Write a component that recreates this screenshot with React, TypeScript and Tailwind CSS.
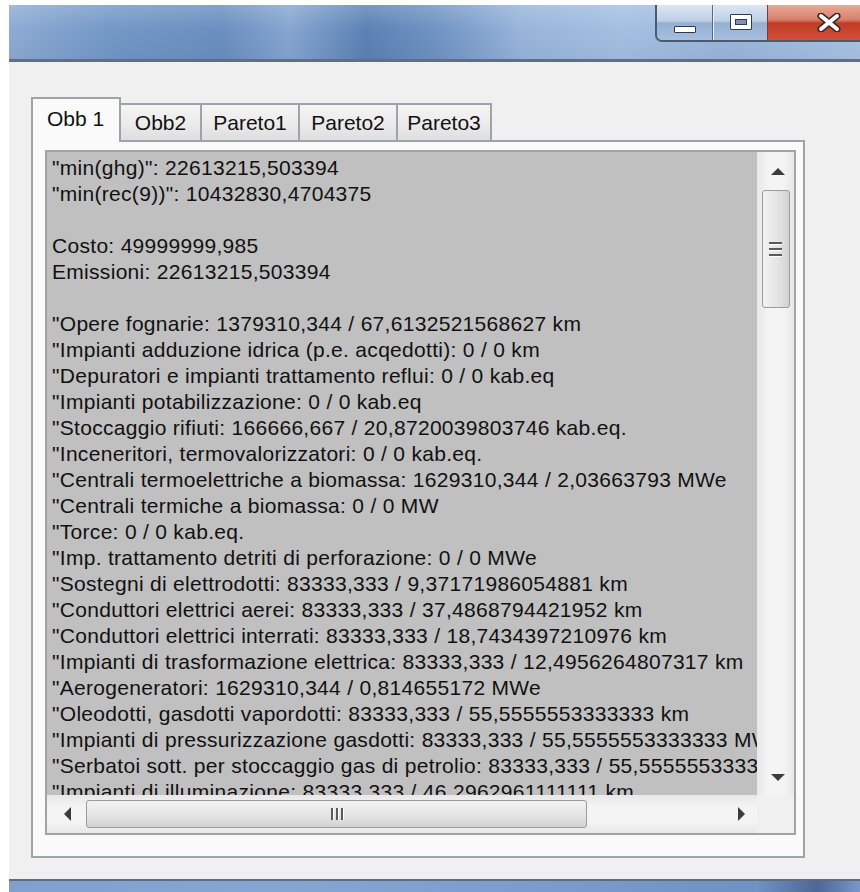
const lines: string[] = [
  '"min(ghg)": 22613215,503394',
  '"min(rec(9))": 10432830,4704375',
  '',
  'Costo: 49999999,985',
  'Emissioni: 22613215,503394',
  '',
  '"Opere fognarie: 1379310,344 / 67,6132521568627 km',
  '"Impianti adduzione idrica (p.e. acqedotti): 0 / 0 km',
  '"Depuratori e impianti trattamento reflui: 0 / 0 kab.eq',
  '"Impianti potabilizzazione: 0 / 0 kab.eq',
  '"Stoccaggio rifiuti: 166666,667 / 20,8720039803746 kab.eq.',
  '"Inceneritori, termovalorizzatori: 0 / 0 kab.eq.',
  '"Centrali termoelettriche a biomassa: 1629310,344 / 2,03663793 MWe',
  '"Centrali termiche a biomassa: 0 / 0 MW',
  '"Torce: 0 / 0 kab.eq.',
  '"Imp. trattamento detriti di perforazione: 0 / 0 MWe',
  '"Sostegni di elettrodotti: 83333,333 / 9,37171986054881 km',
  '"Conduttori elettrici aerei: 83333,333 / 37,4868794421952 km',
  '"Conduttori elettrici interrati: 83333,333 / 18,7434397210976 km',
  '"Impianti di trasformazione elettrica: 83333,333 / 12,4956264807317 km',
  '"Aerogeneratori: 1629310,344 / 0,814655172 MWe',
  '"Oleodotti, gasdotti vapordotti: 83333,333 / 55,5555553333333 km',
  '"Impianti di pressurizzazione gasdotti: 83333,333 / 55,5555553333333 MWe',
  '"Serbatoi sott. per stoccaggio gas di petrolio: 83333,333 / 55,5555553333333 km',
  '"Impianti di illuminazione: 83333,333 / 46,2962961111111 km',
];

const tabs = [
  { label: 'Obb2', w: 'w-[81px]' },
  { label: 'Pareto1', w: 'w-[98px]' },
  { label: 'Pareto2', w: 'w-[98px]' },
  { label: 'Pareto3', w: 'w-[94px]' },
];

function Arrow({ dir }: { dir: 'up' | 'down' | 'left' | 'right' }) {
  const pts = {
    up: '0,7 7,0 14,7',
    down: '0,0 14,0 7,7',
    left: '7,0 7,14 0,7',
    right: '0,0 0,14 7,7',
  }[dir];
  const vertical = dir === 'up' || dir === 'down';
  return (
    <svg width={vertical ? 14 : 7} height={vertical ? 7 : 14} viewBox={vertical ? '0 0 14 7' : '0 0 7 14'}>
      <polygon points={pts} fill="#3c3c3c" />
    </svg>
  );
}

function TitleBar() {
  return (
    <div className="relative flex h-[57px] justify-end border-b-[3px] border-[#5f6f86] bg-[linear-gradient(90deg,#8eabd3_0%,#7398c7_12%,#6a8fc0_25%,#86a6d0_33%,#5b82b5_42%,#6f93c3_50%,#97b4da_60%,#a3bfe1_72%,#9ab6db_85%,#a9c3e3_100%)]">
      <div className="absolute inset-0 bg-[linear-gradient(180deg,rgba(255,255,255,0.18)_0%,rgba(255,255,255,0)_45%,rgba(0,0,0,0.04)_100%)]" />
      <div className="relative flex h-[37px] overflow-hidden rounded-bl-[7px] border-b-2 border-l-2 border-[#4b5a70]">
        <div className="flex w-[56px] items-end justify-center border-r border-[#56677f] bg-[linear-gradient(180deg,#dce6f3_0%,#bfcfe5_45%,#95afd2_52%,#a7bfdf_100%)] pb-[7px]">
          <div className="h-[7px] w-[22px] rounded-[1px] border border-[#2f3a4a] bg-white" />
        </div>
        <div className="flex w-[54px] items-center justify-center border-l border-[#e6eef8] bg-[linear-gradient(180deg,#dce6f3_0%,#bfcfe5_45%,#95afd2_52%,#a7bfdf_100%)] pb-[2px]">
          <div className="flex h-[16px] w-[22px] items-center justify-center rounded-[1px] border border-[#2f3a4a] bg-white">
            <div className="h-[6px] w-[12px] border border-[#2f3a4a] bg-[#7d92b0]" />
          </div>
        </div>
        <div className="flex w-[93px] items-center justify-center border-l border-[#7a3b33] bg-[linear-gradient(180deg,#e9a898_0%,#d8806c_42%,#c33b24_52%,#d0503a_100%)] pl-[30px]">
          <svg width="24" height="19" viewBox="0 0 24 19">
            <path d="M4 3 L20 16 M20 3 L4 16" stroke="#3b2622" strokeWidth="7" strokeLinecap="round" />
            <path d="M4 3 L20 16 M20 3 L4 16" stroke="#ffffff" strokeWidth="4" strokeLinecap="round" />
          </svg>
        </div>
      </div>
    </div>
  );
}

function VScroll() {
  return (
    <div className="flex flex-col bg-[linear-gradient(90deg,#e8e8e8_0%,#f4f4f4_30%,#f4f4f4_70%,#e8e8e8_100%)]">
      <div className="flex h-[38px] items-center justify-center pl-[4px]">
        <Arrow dir="up" />
      </div>
      <div className="mx-auto flex h-[118px] w-[28px] flex-col items-center justify-center gap-[4px] rounded-[3px] border border-[#9b9b9b] bg-[linear-gradient(90deg,#f2f2f2_0%,#e6e6e6_50%,#d2d2d2_100%)]">
        <div className="h-[2px] w-[13px] bg-[#5a5a5a] shadow-[0_1px_0_#ffffff]" />
        <div className="h-[2px] w-[13px] bg-[#5a5a5a] shadow-[0_1px_0_#ffffff]" />
        <div className="h-[2px] w-[13px] bg-[#5a5a5a] shadow-[0_1px_0_#ffffff]" />
      </div>
      <div className="flex-1" />
      <div className="flex h-[36px] items-center justify-center pl-[4px]">
        <Arrow dir="down" />
      </div>
    </div>
  );
}

function HScroll() {
  return (
    <div className="flex items-center bg-[linear-gradient(180deg,#e8e8e8_0%,#f4f4f4_30%,#f4f4f4_70%,#e8e8e8_100%)]">
      <div className="flex w-[39px] justify-center pl-[2px]">
        <Arrow dir="left" />
      </div>
      <div className="flex h-[28px] w-[501px] items-center justify-center gap-[3px] rounded-[3px] border border-[#9b9b9b] bg-[linear-gradient(180deg,#f2f2f2_0%,#e6e6e6_50%,#d2d2d2_100%)]">
        <div className="h-[12px] w-[2px] bg-[#5a5a5a] shadow-[1px_0_0_#ffffff]" />
        <div className="h-[12px] w-[2px] bg-[#5a5a5a] shadow-[1px_0_0_#ffffff]" />
        <div className="h-[12px] w-[2px] bg-[#5a5a5a] shadow-[1px_0_0_#ffffff]" />
      </div>
      <div className="flex flex-1 justify-end pr-[12px]">
        <Arrow dir="right" />
      </div>
    </div>
  );
}

export default function App() {
  return (
    <div className="h-[892px] w-[860px] overflow-hidden bg-white pl-[9px] pt-[5px] font-['Liberation_Sans',Arial,sans-serif] text-[21px] leading-[26px] text-[#111]">
      <div className="flex h-[887px] flex-col">
        <TitleBar />

        <div className="flex-1 bg-[#f0f0f0] pl-[22px] pt-[35px]">
          {/* tab strip */}
          <div className="flex h-[43px] items-end">
            <div className="relative z-10 -mb-[2px] h-[45px] w-[90px] border-x-2 border-t-2 border-[#9fa2a8] bg-[#fafafa] pl-[14px] pt-[7px]">
              Obb 1
            </div>
            {tabs.map((t) => (
              <div
                key={t.label}
                className={`${t.w} flex h-[37px] justify-center border-r-2 border-t-2 border-[#9fa2a8] bg-[linear-gradient(180deg,#f4f4f4_0%,#ececec_50%,#dedede_100%)] pt-[5px]`}
              >
                {t.label}
              </div>
            ))}
          </div>

          {/* tab page */}
          <div className="h-[718px] w-[774px] border-2 border-[#9fa2a8] bg-[#fafafa] pl-[12px] pt-[8px]">
            <div className="grid h-[685px] w-[751px] grid-cols-[1fr_37px] grid-rows-[1fr_38px] border-2 border-[#a3a3a3]">
              <div className="overflow-hidden whitespace-nowrap bg-[#c0c0c0] pl-[5px] pt-[3px] tracking-[0.3px]">
                {lines.map((l, i) => (
                  <div key={i} className="h-[26px]">
                    {l}
                  </div>
                ))}
              </div>
              <VScroll />
              <HScroll />
              <div className="bg-[#f0f0f0]" />
            </div>
          </div>
        </div>

        <div className="h-[13px] border-t-2 border-[#5d6c80] bg-[linear-gradient(90deg,#7f9fcd_0%,#86a6d2_30%,#7c9dcc_60%,#6f91c3_88%,#4c6894_95%,#7898c8_100%)]" />
      </div>
    </div>
  );
}
